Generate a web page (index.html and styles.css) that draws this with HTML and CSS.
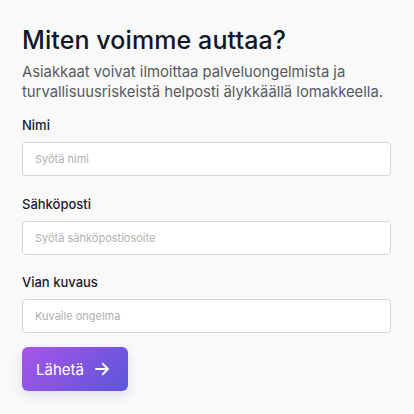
FILE: index.html
```html
<!DOCTYPE html>
<html lang="fi">
<head>
  <meta charset="UTF-8">
  <meta name="viewport" content="width=device-width, initial-scale=1.0">
  <title>Miten voimme auttaa?</title>
  <link rel="stylesheet" href="styles.css">
</head>
<body>
  <div class="wrap">
    <h1>Miten voimme auttaa?</h1>
    <p class="intro">Asiakkaat voivat ilmoittaa palveluongelmista ja turvallisuusriskeistä helposti älykkäällä lomakkeella.</p>

    <form class="form">
      <label class="field">
        <span class="label">Nimi</span>
        <input type="text" placeholder="Syötä nimi">
      </label>
      <label class="field">
        <span class="label">Sähköposti</span>
        <input type="email" placeholder="Syötä sähköpostiosoite">
      </label>
      <label class="field">
        <span class="label">Vian kuvaus</span>
        <input type="text" placeholder="Kuvaile ongelma">
      </label>
      <button type="button" class="send">Lähetä
        <svg width="18" height="18" viewBox="0 0 24 24" fill="none" stroke="currentColor" stroke-width="2.4" stroke-linecap="round" stroke-linejoin="round"><path d="M4 12h15"/><path d="M13 5l7 7-7 7"/></svg>
      </button>
    </form>
  </div>
</body>
</html>
```

FILE: styles.css
```css
body{
  margin: 0;
  background-color: #f9f9f9;
  font-family: Inter, "Noto Sans", sans-serif;
  color: #111827;
}
.wrap{
  padding: 24px 23px 20px 22px;
}
h1{
  margin: 0;
  font-size: 25px;
  line-height: 32px;
  font-weight: 500;
  color: #0f172a;
  letter-spacing: 0.1px;
}
.intro{
  margin: 6px 0 0;
  font-size: 14.8px;
  line-height: 20px;
  color: #555a62;
}
.form{
  display: flex;
  flex-direction: column;
  gap: 19px;
  margin-top: 14px;
}
.field{
  display: flex;
  flex-direction: column;
  gap: 8px;
}
.field + .field + .field{
  margin-top: -1px;
}
.label{
  font-size: 13px;
  line-height: 18px;
  font-weight: 500;
  color: #1a1d2b;
}
input{
  box-sizing: border-box;
  height: 34px;
  padding: 0 12px;
  border: 1px solid #d6d6d6;
  border-radius: 4px;
  background: #fff;
  font-family: inherit;
  font-size: 11px;
  color: #333;
}
input::placeholder{
  color: #b0b0b0;
}
.send{
  align-self: flex-start;
  display: flex;
  align-items: center;
  gap: 9px;
  height: 44px;
  margin-top: -5px;
  padding: 0 17px 0 14px;
  border: none;
  border-radius: 6px;
  background: linear-gradient(135deg, #a855e8, #5b55db);
  box-shadow: 0 4px 12px rgba(80, 60, 160, 0.15);
  color: #fff;
  font-family: inherit;
  font-size: 15px;
}
```
